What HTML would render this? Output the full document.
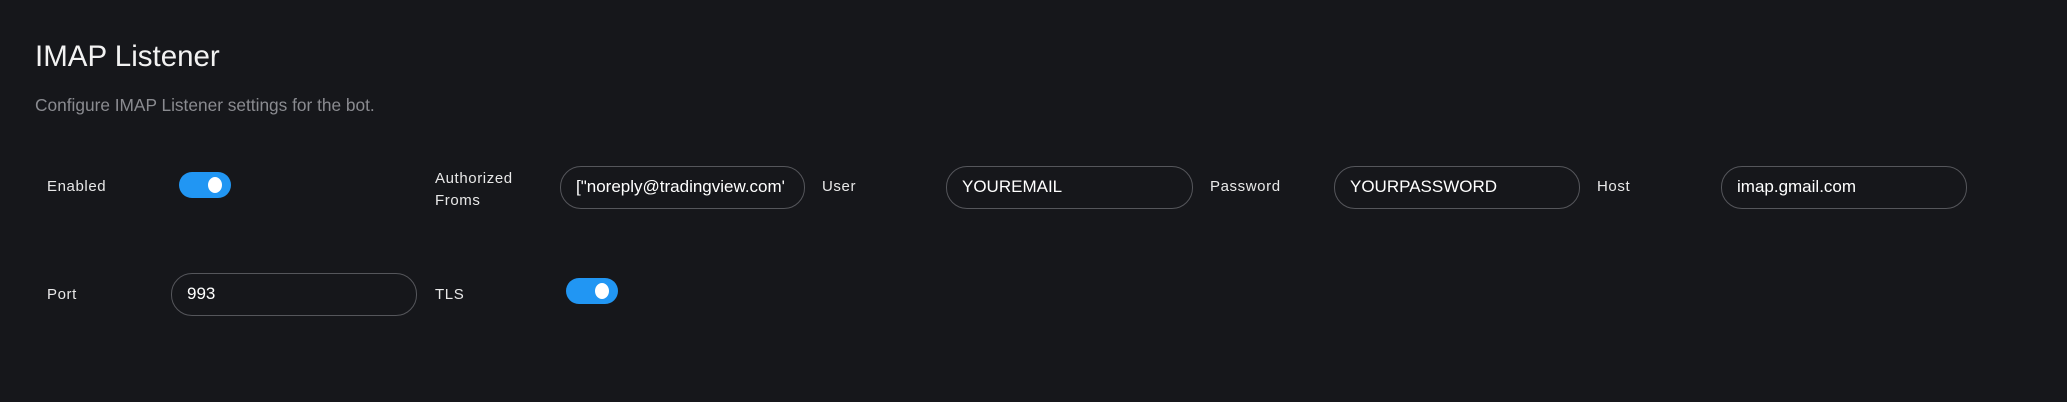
<!DOCTYPE html>
<html><head><meta charset="utf-8"><style>
html,body{margin:0;padding:0;background:#16171b;width:2067px;height:402px;overflow:hidden;font-family:"Liberation Sans",sans-serif;color:#fff}
.a{position:absolute}
h1{position:absolute;left:35px;top:40px;margin:0;font-weight:400;font-size:29.5px;color:#f2f2f2}
.sub{left:35px;top:95px;font-size:17.3px;color:#8a8b90}
.lbl{font-size:15px;color:#e8e8e8;letter-spacing:0.6px}
.inp{border:1.5px solid #55565b;border-radius:21px;box-sizing:border-box;height:43px;font-size:17px;line-height:40px;padding-left:15px;overflow:hidden;white-space:nowrap;color:#fff}
.tg{width:52px;height:26px;border-radius:13px;background:#2196f3}
.tg::after{content:"";position:absolute;right:9px;top:5px;width:14px;height:16px;border-radius:50%;background:#fff}
</style></head><body>
<h1>IMAP Listener</h1>
<div class="a sub">Configure IMAP Listener settings for the bot.</div>

<div class="a lbl" style="left:47px;top:178px">Enabled</div>
<div class="a tg" style="left:179px;top:172px"></div>

<div class="a lbl" style="left:435px;top:168px;line-height:22px">Authorized<br>Froms</div>
<div class="a inp" style="left:560px;top:166px;width:245px">["noreply@tradingview.com'</div>

<div class="a lbl" style="left:822px;top:178px">User</div>
<div class="a inp" style="left:946px;top:166px;width:247px">YOUREMAIL</div>

<div class="a lbl" style="left:1210px;top:178px">Password</div>
<div class="a inp" style="left:1334px;top:166px;width:246px">YOURPASSWORD</div>

<div class="a lbl" style="left:1597px;top:178px">Host</div>
<div class="a inp" style="left:1721px;top:166px;width:246px">imap.gmail.com</div>

<div class="a lbl" style="left:47px;top:286px">Port</div>
<div class="a inp" style="left:171px;top:273px;width:246px">993</div>

<div class="a lbl" style="left:435px;top:286px">TLS</div>
<div class="a tg" style="left:566px;top:278px"></div>
</body></html>
